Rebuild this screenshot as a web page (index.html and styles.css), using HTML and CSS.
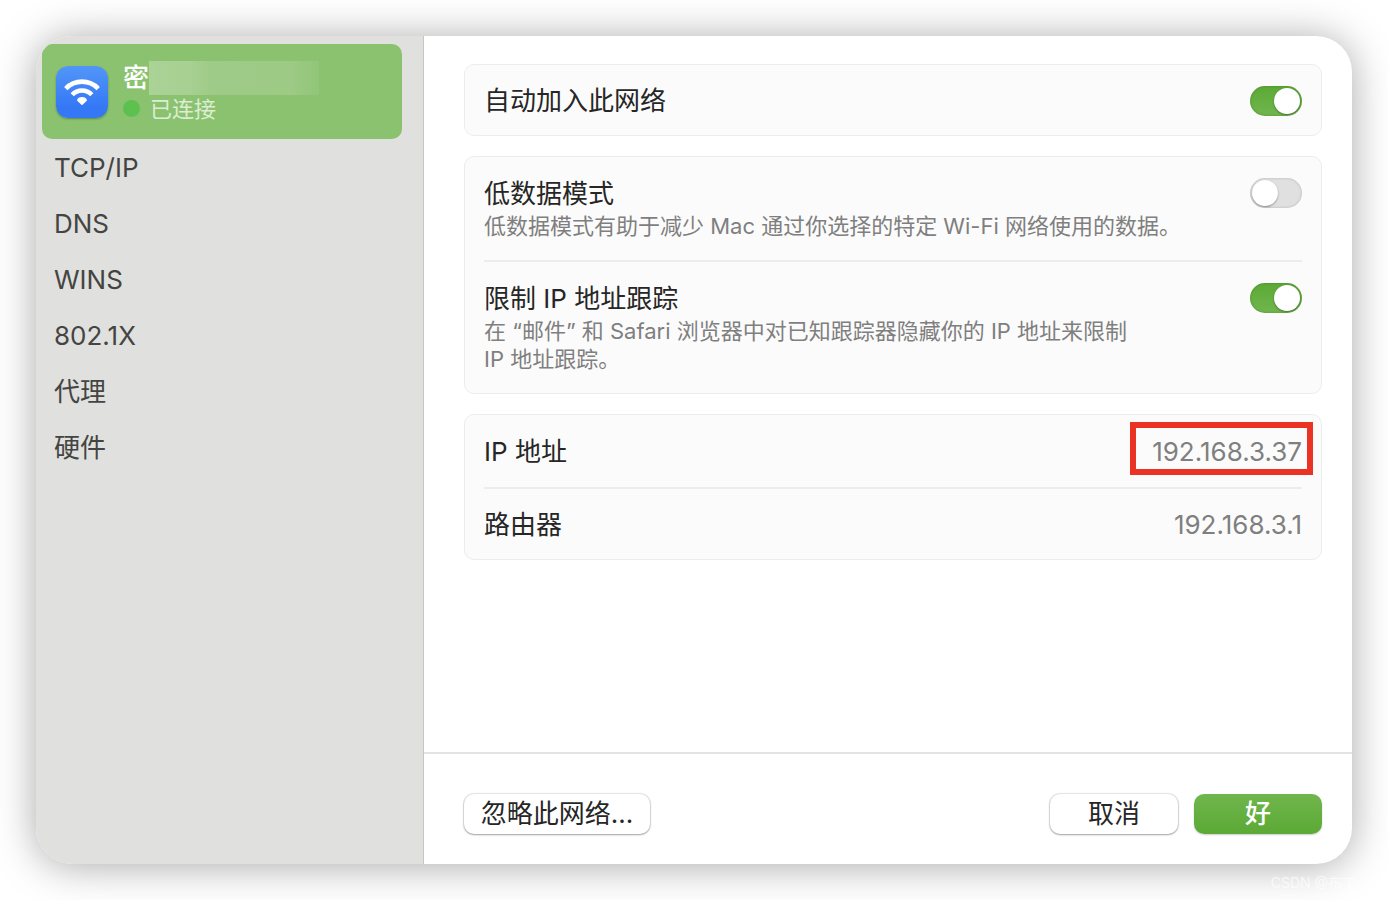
FILE: index.html
```html
<!DOCTYPE html>
<html lang="zh-CN">
<head>
  <meta charset="UTF-8" />
  <meta name="viewport" content="width=device-width, initial-scale=1.0"/>
  <title>Wi-Fi 网络设置</title>
  <link rel="stylesheet" href="styles.css">
</head>
<body>

<div class="window">
  <nav class="sidebar">
    <a href="#wifi" class="network">
      <svg class="wifi-icon" viewBox="0 0 52 52" aria-hidden="true">
        <defs>
          <linearGradient id="wifiBlue" x1="0" y1="0" x2="0" y2="1">
            <stop offset="0" stop-color="#5296f8"/>
            <stop offset="0.8" stop-color="#3478f6"/>
          </linearGradient>
        </defs>
        <rect width="52" height="52" rx="12" fill="url(#wifiBlue)"/>
        <g fill="none" stroke="#fff" stroke-width="4.6">
          <path d="M9.8 22.6 A22.4 22.4 0 0 1 42.2 22.6"/>
          <path d="M16.2 28.8 A13.4 13.4 0 0 1 35.8 28.8"/>
        </g>
        <path d="M26 38.2 L21.8 34.2 Q22.6 32 26 31.8 Q29.4 32 30.2 34.2 Z" fill="#fff" stroke="#fff" stroke-width="1.6" stroke-linejoin="round"/>
      </svg>
      <span class="network-info">
        <span class="network-name">密<span class="redacted"></span></span>
        <span class="network-status"><span class="dot"></span>已连接</span>
      </span>
    </a>
    <a href="#tcpip" class="nav-item">TCP/IP</a>
    <a href="#dns" class="nav-item">DNS</a>
    <a href="#wins" class="nav-item">WINS</a>
    <a href="#8021x" class="nav-item">802.1X</a>
    <a href="#proxy" class="nav-item">代理</a>
    <a href="#hardware" class="nav-item">硬件</a>
  </nav>

  <main class="main">
    <div class="content">
      <section class="card">
        <div class="row">
          <label class="title" for="autoJoin">自动加入此网络</label>
          <input type="checkbox" class="switch" id="autoJoin" checked />
        </div>
      </section>

      <section class="card">
        <div class="row detail">
          <div>
            <label class="title" for="lowData">低数据模式</label>
            <p class="desc">低数据模式有助于减少 Mac 通过你选择的特定 Wi-Fi 网络使用的数据。</p>
          </div>
          <input type="checkbox" class="switch" id="lowData" />
        </div>
        <div class="row detail">
          <div>
            <label class="title" for="limitIp">限制 IP 地址跟踪</label>
            <p class="desc narrow">在 “邮件” 和 Safari 浏览器中对已知跟踪器隐藏你的 IP 地址来限制 IP 地址跟踪。</p>
          </div>
          <input type="checkbox" class="switch" id="limitIp" checked />
        </div>
      </section>

      <section class="card">
        <div class="row address">
          <span class="title">IP 地址</span>
          <span class="value marked">192.168.3.37</span>
        </div>
        <div class="row address">
          <span class="title">路由器</span>
          <span class="value">192.168.3.1</span>
        </div>
      </section>
    </div>

    <footer class="actions">
      <button type="button" class="btn forget">忽略此网络...</button>
      <button type="button" class="btn">取消</button>
      <button type="button" class="btn primary">好</button>
    </footer>
  </main>
</div>

<span class="watermark">CSDN @布丁</span>

</body>
</html>
```

FILE: styles.css
```css
:root {
  --green: #5ca935;
  --green-light: #70b64d;
  --text: #262626;
  --muted: #7f7f7f;
  --line: #ececec;
}

* {
  box-sizing: border-box;
}

body {
  margin: 0;
  padding: 36px;
  min-height: 100vh;
  display: flex;
  background: #fff;
  color: var(--text);
  font-family: Inter, "Noto Sans CJK SC", sans-serif;
  font-size: 26px;
  line-height: 32px;
}

.window {
  flex: 1;
  display: flex;
  border-radius: 36px;
  overflow: hidden;
  background: #fff;
  box-shadow: 0 2px 40px rgba(0, 0, 0, 0.34);
}

.sidebar {
  width: 388px;
  flex-shrink: 0;
  padding: 8px 21px 8px 6px;
  background: #e0e0de;
  border-right: 1px solid #c6c6c5;
}

.network {
  display: flex;
  align-items: center;
  gap: 15px;
  height: 95px;
  padding: 0 14px;
  border-radius: 10px;
  background: #8bc26f;
  color: #fff;
  text-decoration: none;
}

.wifi-icon {
  width: 52px;
  height: 52px;
  border-radius: 12px;
  box-shadow: 0 1px 2px rgba(0, 0, 0, 0.3);
}

.network-info {
  display: flex;
  flex-direction: column;
}

.network-name {
  display: flex;
  align-items: center;
  font-weight: 500;
}

.redacted {
  width: 170px;
  height: 34px;
  background: linear-gradient(to right, #abd297, #a7d092 24%, #9fcb88 36%, #9dca85 84%, #91c577);
}

.network-status {
  display: flex;
  align-items: center;
  gap: 10px;
  font-size: 22px;
  line-height: 28px;
  color: #dcedd4;
}

.dot {
  width: 17px;
  height: 17px;
  border-radius: 50%;
  background: #5cc14e;
}

.nav-item {
  display: block;
  padding: 13px 12px 11px;
  color: #444442;
  text-decoration: none;
}

.main {
  flex: 1;
  display: flex;
  flex-direction: column;
}

.content {
  flex: 1;
  display: flex;
  flex-direction: column;
  gap: 20px;
  padding: 28px 30px 28px 40px;
}

.card {
  padding: 0 19px;
  border: 1px solid var(--line);
  border-radius: 10px;
  background: #fbfbfb;
}

.row {
  display: flex;
  justify-content: space-between;
  align-items: center;
  min-height: 70px;
  padding-top: 2px;
}

.row + .row {
  border-top: 2px solid var(--line);
}

.detail {
  align-items: flex-start;
  padding: 21px 0 20px;
}

.address {
  min-height: 72px;
}

.title {
  display: block;
}

.desc {
  margin: 2px 0 0;
  font-size: 22px;
  line-height: 28px;
  color: var(--muted);
}

.narrow {
  max-width: 656px;
}

.switch {
  appearance: none;
  flex-shrink: 0;
  width: 52px;
  height: 30px;
  margin: 0;
  padding: 2px;
  border-radius: 15px;
  background: #e0e0e0;
  box-shadow: inset 0 0 3px rgba(0, 0, 0, 0.2);
  cursor: pointer;
}

.switch::before {
  content: "";
  display: block;
  width: 26px;
  height: 26px;
  border-radius: 50%;
  background: #fff;
  box-shadow: 0 1px 2px rgba(0, 0, 0, 0.35);
}

.switch:checked {
  background: linear-gradient(var(--green), var(--green-light));
}

.switch:checked::before {
  margin-left: auto;
}

.value {
  color: var(--muted);
}

.marked {
  margin: 0 -11px 7px 0;
  padding: 8px 5px 1px 16px;
  border: 6px solid #ea3323;
}

.actions {
  display: flex;
  gap: 16px;
  padding: 40px 30px 30px 40px;
  border-top: 2px solid #e3e3e3;
}

.btn {
  width: 128px;
  height: 40px;
  padding: 0;
  border: none;
  border-radius: 10px;
  background: #fff;
  color: var(--text);
  font: inherit;
  line-height: 38px;
  box-shadow: 0 0 1px 1px rgba(0, 0, 0, 0.1), 0 1px 2px rgba(0, 0, 0, 0.3);
  cursor: pointer;
}

.forget {
  width: 186px;
  margin-right: auto;
}

.primary {
  background: linear-gradient(var(--green-light), var(--green));
  color: #fff;
  font-weight: 500;
  box-shadow: 0 1px 2px rgba(0, 0, 0, 0.2);
}

.watermark {
  position: absolute;
  right: 32px;
  bottom: 7px;
  font-size: 14px;
  line-height: 20px;
  color: rgba(255, 255, 255, 0.7);
}
```
